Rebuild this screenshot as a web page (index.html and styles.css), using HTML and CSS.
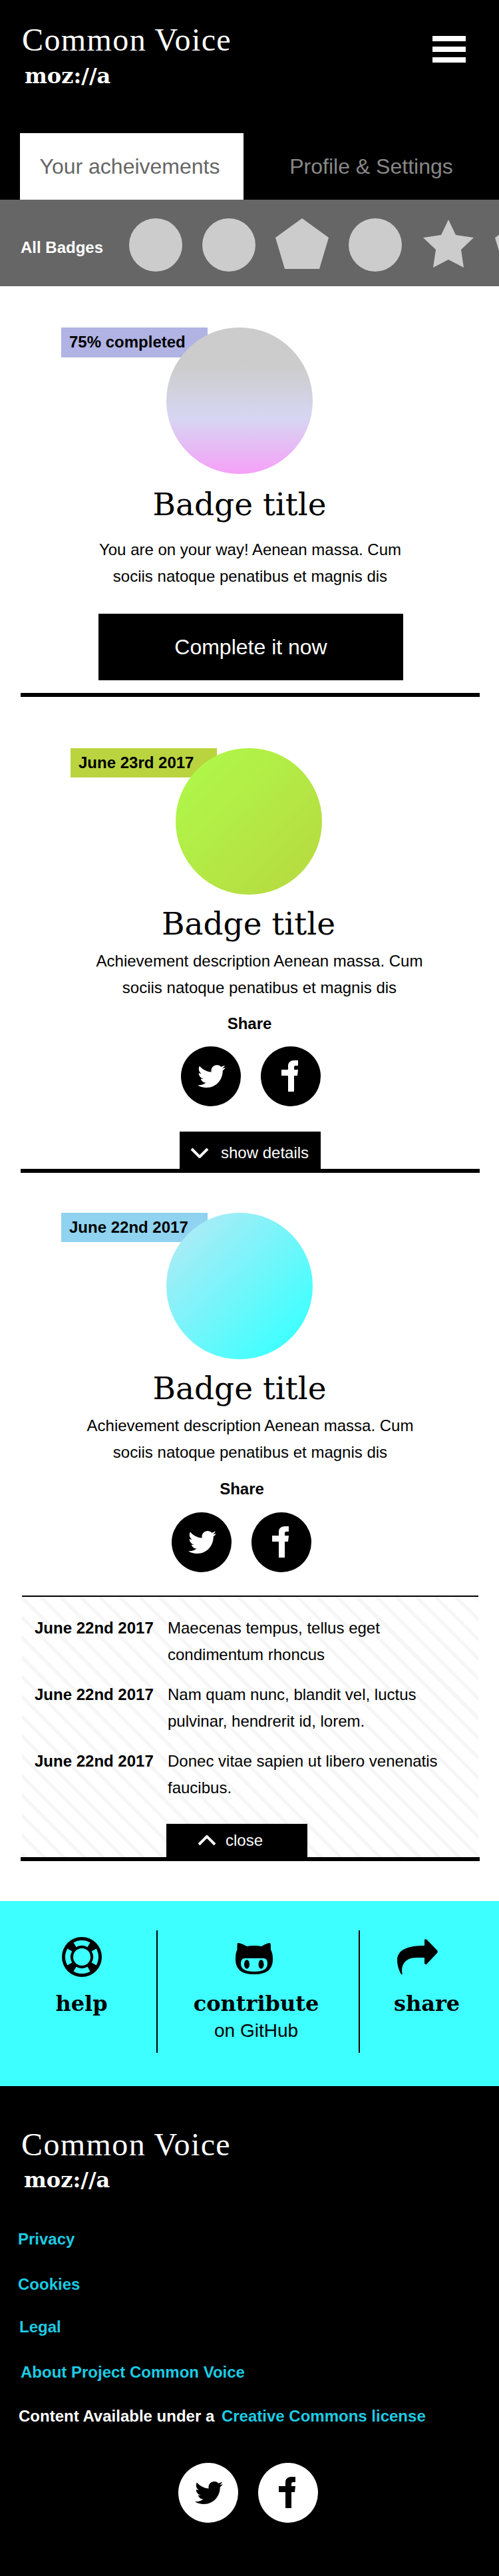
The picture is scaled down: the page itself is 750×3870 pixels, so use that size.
FILE: index.html
```html
<!DOCTYPE html>
<html lang="en">
<head>
    <meta charset="UTF-8">
    <meta name="viewport" content="width=device-width, initial-scale=1.0">
    <title>Common Voice - Your acheivements</title>
    <link rel="stylesheet" href="styles.css">
</head>
<body>
    <svg class="icon-defs" xmlns="http://www.w3.org/2000/svg">
        <symbol id="icon-twitter" viewBox="0 0 90 90">
            <path transform="translate(25 24) scale(.082)" d="M459.37 151.716c.325 4.548.325 9.097.325 13.645 0 138.72-105.583 298.558-298.558 298.558-59.452 0-114.68-17.219-161.137-47.106 8.447.974 16.568 1.299 25.34 1.299 49.055 0 94.213-16.568 130.274-44.832-46.132-.975-84.792-31.188-98.112-72.772 6.498.974 12.995 1.624 19.818 1.624 9.421 0 18.843-1.3 27.614-3.573-48.081-9.747-84.143-51.98-84.143-102.985v-1.299c13.969 7.797 30.214 12.67 47.431 13.319-28.264-18.843-46.781-51.005-46.781-87.391 0-19.492 5.197-37.36 14.294-52.954 51.655 63.675 129.3 105.258 216.365 109.807-1.624-7.797-2.599-15.918-2.599-24.04 0-57.828 46.782-104.934 104.934-104.934 30.213 0 57.502 12.67 76.67 33.137 23.715-4.548 46.456-13.32 66.599-25.34-7.798 24.366-24.366 44.833-46.132 57.827 21.117-2.273 41.584-8.122 60.426-16.243-14.292 20.791-32.161 39.308-52.628 54.253z"/>
        </symbol>
        <symbol id="icon-facebook" viewBox="0 0 90 90">
            <path d="M41 68V44H31V35H41V29C41 24 45 21 50 21H56V29H52C50.5 29 50 30 50 31.5V35H56L55 44H50V68Z"/>
        </symbol>
    </svg>

    <header class="site-header">
        <div class="header-top">
            <div class="brand">
                <div class="brand-name">Common Voice</div>
                <div class="brand-org">moz://a</div>
            </div>
            <div class="hamburger"><span></span><span></span><span></span></div>
        </div>
        <nav class="tabs">
            <a class="tab tab-active">Your acheivements</a>
            <a class="tab">Profile &amp; Settings</a>
        </nav>
    </header>

    <section class="all-badges">
        <span class="all-badges-label">All Badges</span>
        <span class="mini-badge"></span>
        <span class="mini-badge"></span>
        <svg class="mini-shape" viewBox="0 0 80 80"><polygon points="40,0 80,29 66,76 14,76 0,29"/></svg>
        <span class="mini-badge"></span>
        <svg class="mini-shape" viewBox="0 0 80 80"><polygon points="40,2 51,25 78,29 59,47 63,74 40,62 17,74 21,47 2,29 29,25"/></svg>
        <svg class="mini-shape" viewBox="0 0 80 80"><polygon points="40,0 80,29 66,76 14,76 0,29"/></svg>
    </section>

    <article class="badge badge-progress">
        <div class="badge-art">
            <span class="badge-tag tag-purple">75% completed</span>
            <div class="badge-circle circle-purple"></div>
        </div>
        <h2 class="badge-title">Badge title</h2>
        <p class="badge-desc">You are on your way! Aenean massa. Cum<br>sociis natoque penatibus et magnis dis</p>
        <a class="complete-btn">Complete it now</a>
    </article>

    <article class="badge badge-green">
        <div class="badge-art">
            <span class="badge-tag tag-green">June 23rd 2017</span>
            <div class="badge-circle circle-green"></div>
        </div>
        <h2 class="badge-title">Badge title</h2>
        <p class="badge-desc">Achievement description Aenean massa. Cum<br>sociis natoque penatibus et magnis dis</p>
        <div class="share-label">Share</div>
        <div class="social-row">
            <a class="social-btn"><svg><use href="#icon-twitter"/></svg></a>
            <a class="social-btn"><svg><use href="#icon-facebook"/></svg></a>
        </div>
        <a class="toggle-btn toggle-show">
            <svg class="chevron" viewBox="0 0 28 16"><polyline points="2,2 14,14 26,2"/></svg>
            show details
        </a>
    </article>

    <article class="badge badge-blue">
        <div class="badge-art">
            <span class="badge-tag tag-blue">June 22nd 2017</span>
            <div class="badge-circle circle-blue"></div>
        </div>
        <h2 class="badge-title">Badge title</h2>
        <p class="badge-desc">Achievement description Aenean massa. Cum<br>sociis natoque penatibus et magnis dis</p>
        <div class="share-label">Share</div>
        <div class="social-row">
            <a class="social-btn"><svg><use href="#icon-twitter"/></svg></a>
            <a class="social-btn"><svg><use href="#icon-facebook"/></svg></a>
        </div>
        <div class="details">
            <div class="detail-row">
                <strong>June 22nd 2017</strong>
                <span>Maecenas tempus, tellus eget condimentum rhoncus</span>
            </div>
            <div class="detail-row">
                <strong>June 22nd 2017</strong>
                <span>Nam quam nunc, blandit vel, luctus pulvinar, hendrerit id, lorem.</span>
            </div>
            <div class="detail-row">
                <strong>June 22nd 2017</strong>
                <span>Donec vitae sapien ut libero venenatis faucibus.</span>
            </div>
            <a class="toggle-btn toggle-close">
                <svg class="chevron" viewBox="0 0 28 16"><polyline points="2,14 14,2 26,14"/></svg>
                close
            </a>
        </div>
    </article>

    <section class="help-bar">
        <div class="help-col col-help">
            <svg class="help-icon" viewBox="-30 -30 60 60">
                <circle r="30"/>
                <circle class="cut" r="13"/>
                <path class="cut-arc" d="M-10.5 -18.2A21 21 0 0 1 10.5 -18.2"/>
                <path class="cut-arc" transform="rotate(90)" d="M-10.5 -18.2A21 21 0 0 1 10.5 -18.2"/>
                <path class="cut-arc" transform="rotate(180)" d="M-10.5 -18.2A21 21 0 0 1 10.5 -18.2"/>
                <path class="cut-arc" transform="rotate(270)" d="M-10.5 -18.2A21 21 0 0 1 10.5 -18.2"/>
            </svg>
            <div class="help-title">help</div>
        </div>
        <div class="help-col col-contribute">
            <svg class="help-icon icon-octocat" viewBox="0 0 60 60">
                <g transform="translate(2 9)">
                    <path d="M4 0C2.5 0 2.5 2 2.5 10C.5 14 0 18 0 24C0 39 8 47 28 47C48 47 56 39 56 24C56 18 55 14 53 10C53 2 53 0 51 0C49 0 44 2 39 5C32 3.5 24 3.5 17 5C12 2 6 0 4 0Z"/>
                    <path class="cut" d="M14 23H42C46 23 48 26 48 31C48 39 42 43 28 43C14 43 8 39 8 31C8 26 10 23 14 23Z"/>
                    <ellipse cx="17" cy="32" rx="4" ry="6.7"/>
                    <ellipse cx="38.5" cy="32" rx="4" ry="6.7"/>
                </g>
            </svg>
            <div class="help-title">contribute</div>
            <div class="help-sub">on GitHub</div>
        </div>
        <div class="help-col col-share">
            <svg class="help-icon icon-share" viewBox="0 0 62 60">
                <path transform="translate(0 3)" d="M41 2V10C18 10 0 15 0 32C0 40 3 48 6 53C7 54 8 53 7.5 51C6 42 9 28 30 28H41V36C41 38 43 39 44.5 37.5L60 21C61 20 61 18 60 17L44.5 1C43 -.5 41 0 41 2Z"/>
            </svg>
            <div class="help-title">share</div>
        </div>
    </section>

    <footer class="site-footer">
        <div class="brand">
            <div class="brand-name">Common Voice</div>
            <div class="brand-org">moz://a</div>
        </div>
        <ul class="footer-links">
            <li class="link-privacy"><a>Privacy</a></li>
            <li class="link-cookies"><a>Cookies</a></li>
            <li class="link-legal"><a>Legal</a></li>
            <li class="link-about"><a>About Project Common Voice</a></li>
            <li class="link-license">Content Available under a <a>Creative Commons license</a></li>
        </ul>
        <div class="social-row">
            <a class="social-btn"><svg><use href="#icon-twitter"/></svg></a>
            <a class="social-btn"><svg><use href="#icon-facebook"/></svg></a>
        </div>
    </footer>
</body>
</html>
```

FILE: styles.css
```css
* {
    box-sizing: border-box;
}

body {
    margin: 0;
    width: 750px;
    overflow-x: hidden;
    font-family: "Liberation Sans", Arial, sans-serif;
    font-size: 24px;
    background-color: white;
    color: black;
}

.icon-defs {
    display: none;
}

/* header */
.site-header {
    background-color: black;
    height: 300px;
}

.header-top {
    display: flex;
    justify-content: space-between;
    height: 200px;
    padding: 30px 50px 0 33px;
}

.brand-name {
    font-family: "Liberation Serif", serif;
    font-size: 48px;
    line-height: 60px;
    letter-spacing: 1.4px;
    color: white;
}

.brand-org {
    margin-top: 4px;
    margin-left: 4px;
    font-family: "DejaVu Serif", serif;
    font-weight: bold;
    font-size: 32px;
    line-height: 40px;
    color: white;
}

.hamburger {
    display: flex;
    flex-direction: column;
    gap: 8px;
    margin-top: 24px;
}

.hamburger span {
    display: block;
    width: 50px;
    height: 8px;
    background-color: white;
}

.tabs {
    display: flex;
    padding-left: 30px;
}

.tab {
    font-size: 32px;
    line-height: 100px;
    text-align: center;
    color: #888;
    width: 384px;
}

.tab-active {
    width: 336px;
    padding-right: 6px;
    background-color: white;
    color: #666;
}

/* badge strip */
.all-badges {
    display: flex;
    align-items: flex-start;
    gap: 30px;
    height: 130px;
    padding: 28px 0 0 31px;
    background-color: #666;
    overflow: hidden;
}

.all-badges-label {
    width: 133px;
    flex-shrink: 0;
    margin-top: 29px;
    font-weight: bold;
    line-height: 30px;
    color: white;
}

.mini-badge {
    flex-shrink: 0;
    width: 80px;
    height: 80px;
    border-radius: 50%;
    background-color: #ccc;
}

.mini-shape {
    flex-shrink: 0;
    width: 80px;
    height: 80px;
    fill: #ccc;
}

/* badge cards */
.badge {
    margin: 0 29px 0 31px;
    border-bottom: 6px solid black;
}

.badge-art {
    position: relative;
    padding-left: 219px;
}

.badge-circle {
    position: relative;
    width: 220px;
    height: 220px;
    border-radius: 50%;
}

.badge-tag {
    position: absolute;
    left: 61px;
    top: 0;
    width: 220px;
    height: 44px;
    padding-left: 12px;
    font-weight: bold;
    line-height: 44px;
}

.tag-purple {
    background-color: #b0b3e3;
    height: 45px;
}

.tag-green {
    background-color: #b9d43f;
}

.tag-blue {
    background-color: #8fd3f0;
}

.circle-purple {
    background: linear-gradient(180deg, #cccccc 25%, #d6d6f2 62%, #f6a0f8 100%);
}

.circle-green {
    background: linear-gradient(135deg, #aefb4a, #b8d840);
}

.circle-blue {
    background: linear-gradient(135deg, #bce8f4, #40ffff 85%);
}

.badge-title {
    margin: 14px 5px 0 0;
    font-family: "DejaVu Serif", serif;
    font-weight: normal;
    font-size: 47px;
    line-height: 60px;
    text-align: center;
}

.badge-desc {
    margin: 6px 0 0 0;
    line-height: 40px;
    text-align: center;
}

.share-label {
    margin-top: 20px;
    font-weight: bold;
    line-height: 30px;
    text-align: center;
}

.social-row {
    display: flex;
    gap: 30px;
    margin-top: 20px;
}

.social-btn {
    display: block;
    width: 90px;
    height: 90px;
    border-radius: 50%;
    background-color: black;
    color: white;
}

.social-btn svg {
    display: block;
    width: 90px;
    height: 90px;
    fill: currentColor;
}

.badge-progress {
    padding-top: 62px;
    padding-bottom: 19px;
}

.badge-progress .badge-title {
    margin: 16px 32px 0 0;
}

.badge-progress .badge-desc {
    margin-top: 18px;
}

.complete-btn {
    display: block;
    width: 458px;
    height: 100px;
    margin: 36px 0 0 117px;
    background-color: black;
    color: white;
    font-size: 32px;
    line-height: 100px;
    text-align: center;
}

.badge-green {
    padding-top: 77px;
}

.badge-green .badge-art {
    padding-left: 233px;
}

.badge-green .badge-tag {
    left: 75px;
}

.badge-green .badge-desc {
    margin-left: 28px;
}

.badge-green .share-label {
    margin-top: 19px;
    margin-right: 2px;
}

.badge-green .social-row {
    margin-top: 19px;
    padding-left: 241px;
}

.toggle-btn {
    display: flex;
    align-items: center;
    width: 212px;
    background-color: black;
    color: white;
}

.chevron {
    flex-shrink: 0;
    width: 28px;
    height: 16px;
    fill: none;
    stroke: white;
    stroke-width: 4;
}

.toggle-show {
    height: 56px;
    margin: 38px 0 0 239px;
    padding: 8px 0 0 16px;
    gap: 18px;
}

.toggle-close {
    height: 50px;
    margin: 34px 0 0 217px;
    padding-left: 47px;
    gap: 14px;
}

.badge-blue {
    padding-top: 60px;
    margin-bottom: 60px;
}

.badge-blue .badge-title,
.badge-green .badge-title {
    margin-top: 14px;
}

.badge-blue .badge-title {
    margin-right: 32px;
}

.badge-blue .share-label {
    margin-right: 25px;
}

.badge-blue .social-row {
    padding-left: 227px;
}

.details {
    margin: 35px 2px 0 2px;
    padding-top: 27px;
    border-top: 2px solid black;
    background: repeating-linear-gradient(45deg, #f6f6f6 0, #f6f6f6 5px, white 5px, white 21px);
}

.detail-row {
    display: grid;
    grid-template-columns: 200px 1fr;
    padding-left: 19px;
    padding-right: 30px;
    margin-bottom: 20px;
    line-height: 40px;
}

.details .detail-row:nth-child(3) {
    margin-bottom: 0;
}

/* help bar */
.help-bar {
    display: flex;
    height: 278px;
    padding-top: 44px;
    background-color: #3effff;
}

.help-col {
    height: 184px;
    padding-top: 10px;
    text-align: center;
}

.col-help {
    width: 235px;
    padding-left: 10px;
}

.col-contribute {
    width: 306px;
    padding-right: 6px;
    border-left: 2px solid black;
    border-right: 2px solid black;
}

.col-share {
    width: 209px;
    padding-right: 8px;
}

.help-icon {
    display: block;
    width: 60px;
    height: 60px;
    margin: 0 auto;
}

.help-icon .cut {
    fill: #3effff;
}

.help-icon .cut-arc {
    fill: none;
    stroke: #3effff;
    stroke-width: 8;
}

.icon-octocat {
    position: relative;
    left: -3px;
}

.icon-share {
    width: 62px;
    position: relative;
    left: -14px;
}

.help-title {
    margin-top: 15px;
    font-family: "DejaVu Serif", serif;
    font-weight: bold;
    font-size: 32px;
    line-height: 50px;
}

.help-sub {
    margin-top: -1px;
    font-size: 28px;
    line-height: 34px;
}

/* footer */
.site-footer {
    height: 736px;
    padding: 58px 0 0 32px;
    background-color: black;
    color: white;
}

.site-footer .brand-org {
    margin-top: 3px;
}

.footer-links {
    list-style: none;
    margin: 54px 0 0 -5px;
    padding: 0;
    font-weight: bold;
    line-height: 30px;
}

.footer-links a {
    color: #1ccbe3;
}

.link-cookies {
    margin-top: 38px;
}

.link-legal {
    margin-top: 34px;
    margin-left: 2px;
}

.link-about {
    margin-top: 38px;
    margin-left: 4px;
}

.link-license {
    margin-top: 36px;
    margin-left: 1px;
}

.link-license a {
    margin-left: 4px;
}

.site-footer .social-row {
    margin-top: 55px;
    padding-left: 236px;
}

.site-footer .social-btn {
    background-color: white;
    color: black;
}
```
